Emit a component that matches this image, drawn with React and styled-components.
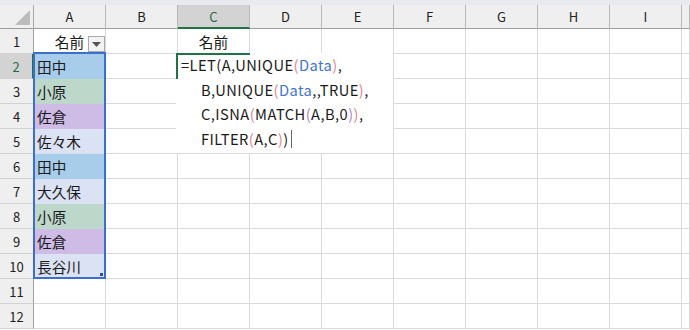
import React from 'react';
import styled, { createGlobalStyle } from 'styled-components';

const GlobalStyle = createGlobalStyle`
  body {
    margin: 0;
    background: #fff;
    font-family: "Noto Sans CJK JP", "Noto Sans", sans-serif;
    color: #111;
  }
`;

const COLUMNS = ['A', 'B', 'C', 'D', 'E', 'F', 'G', 'H', 'I', ''];
const FILLS = {
  blue: '#a8cdea',
  green: '#bdd8cb',
  lavender: '#cebbe6',
  pale: '#dae2f3',
};
const NAMES = [
  ['田中', 'blue'],
  ['小原', 'green'],
  ['佐倉', 'lavender'],
  ['佐々木', 'pale'],
  ['田中', 'blue'],
  ['大久保', 'pale'],
  ['小原', 'green'],
  ['佐倉', 'lavender'],
  ['長谷川', 'pale'],
];
const INK = { pink: '#e4848c', purple: '#b07fd3', blue: '#3f74cf' };

const App = () => {
  const rows = Array.from({ length: 12 }, (_, i) => i + 1);

  const renderCell = (row, col) => {
    if (row === 1 && col === 'A') {
      return (
        <Cell key={col} $center>
          名前
          <FilterButton>
            <svg width="9" height="5" viewBox="0 0 9 5">
              <path d="M0 0h9L4.5 5z" fill="#555" />
            </svg>
          </FilterButton>
        </Cell>
      );
    }
    if (row === 1 && col === 'C') {
      return <Cell key={col} $center>名前</Cell>;
    }
    if (col === 'A' && row >= 2 && row <= 10) {
      const [name, fill] = NAMES[row - 2];
      return (
        <Cell key={col} $fill={FILLS[fill]}>
          {name}
          {row === 2 && (
            <RangeOutline>
              <Handle />
            </RangeOutline>
          )}
        </Cell>
      );
    }
    if (row === 2 && col === 'C') {
      return (
        <Cell key={col}>
          <Editor>
            <Line>
              =LET(A,UNIQUE<Ink $c={INK.pink}>(</Ink><Ink $c={INK.blue}>Data</Ink>
              <Ink $c={INK.pink}>)</Ink>,
            </Line>
            <Line $indent>
              B,UNIQUE<Ink $c={INK.pink}>(</Ink><Ink $c={INK.blue}>Data</Ink>,,TRUE
              <Ink $c={INK.pink}>)</Ink>,
            </Line>
            <Line $indent>
              C,ISNA<Ink $c={INK.pink}>(</Ink>MATCH<Ink $c={INK.purple}>(</Ink>A,B,0
              <Ink $c={INK.purple}>)</Ink><Ink $c={INK.pink}>)</Ink>,
            </Line>
            <Line $indent>
              FILTER<Ink $c={INK.pink}>(</Ink>A,C<Ink $c={INK.pink}>)</Ink>)
              <Caret />
            </Line>
          </Editor>
        </Cell>
      );
    }
    return <Cell key={col} />;
  };

  return (
    <>
      <GlobalStyle />
      <Window>
        <TopStrip />
        <Sheet>
          <Corner>
            <CornerMark />
          </Corner>
          {COLUMNS.map((c, i) => (
            <ColHead key={i} $active={c === 'C'}>{c}</ColHead>
          ))}
          {rows.map((r) => (
            <React.Fragment key={r}>
              <RowHead $active={r === 2}>{r}</RowHead>
              {COLUMNS.map((c, i) => renderCell(r, c || 'J' + i))}
            </React.Fragment>
          ))}
        </Sheet>
      </Window>
    </>
  );
};

export default App;

const Window = styled.div`
  width: 690px;
  height: 330px;
  overflow: hidden;
  display: flex;
  flex-direction: column;
`;

const TopStrip = styled.div`
  height: 5px;
  background: #e7eaee;
  flex: none;
`;

const Sheet = styled.div`
  display: grid;
  grid-template-columns: 34px repeat(9, 72px) 1fr;
  grid-template-rows: 24px repeat(12, 25px);
`;

const Corner = styled.div`
  box-sizing: border-box;
  background: #efefef;
  border-right: 1px solid #a8a8a8;
  border-bottom: 1px solid #9e9e9e;
  display: flex;
  align-items: flex-end;
  justify-content: flex-end;
  padding: 0 3px 3px 0;
`;

const CornerMark = styled.div`
  width: 0;
  height: 0;
  border-left: 15px solid transparent;
  border-bottom: 15px solid #bcbcbc;
`;

const ColHead = styled.div`
  box-sizing: border-box;
  display: flex;
  align-items: center;
  justify-content: center;
  font-size: 13px;
  background: ${(p) => (p.$active ? '#d3d3d3' : '#efefef')};
  color: ${(p) => (p.$active ? '#1e6b40' : '#222')};
  border-right: 1px solid #b8b8b8;
  border-bottom: ${(p) => (p.$active ? '2px solid #217346' : '1px solid #9e9e9e')};
`;

const RowHead = styled.div`
  box-sizing: border-box;
  display: flex;
  align-items: center;
  justify-content: center;
  font-size: 13px;
  background: ${(p) => (p.$active ? '#d3d3d3' : '#efefef')};
  color: ${(p) => (p.$active ? '#1e6b40' : '#222')};
  border-bottom: 1px solid #d2d2d2;
  border-right: ${(p) => (p.$active ? '2px solid #217346' : '1px solid #9e9e9e')};
`;

const Cell = styled.div`
  box-sizing: border-box;
  position: relative;
  display: flex;
  align-items: center;
  justify-content: ${(p) => (p.$center ? 'center' : 'flex-start')};
  padding: 0 3px;
  font-size: 14.67px;
  white-space: nowrap;
  background: ${(p) => p.$fill || '#fff'};
  border-right: 1px solid #dadada;
  border-bottom: 1px solid ${(p) => (p.$fill ? 'transparent' : '#dadada')};
  color: #1a1a1a;
`;

const FilterButton = styled.div`
  position: absolute;
  right: 0;
  bottom: 1px;
  width: 17px;
  height: 16px;
  box-sizing: border-box;
  border: 1px solid #a9a9a9;
  background: #f3f3f3;
  display: flex;
  align-items: center;
  justify-content: center;
`;

const RangeOutline = styled.div`
  position: absolute;
  left: -1px;
  top: -2px;
  width: 73px;
  height: 227px;
  box-sizing: border-box;
  border: 2px solid #3b6fcb;
  pointer-events: none;
  z-index: 3;
`;

const Handle = styled.div`
  position: absolute;
  right: 1px;
  bottom: 1px;
  width: 3px;
  height: 3px;
  background: #24509e;
`;

const Editor = styled.div`
  position: absolute;
  left: -2px;
  top: -1px;
  width: 217px;
  height: 100px;
  box-sizing: border-box;
  background: #fff;
  padding: 0 0 0 5px;
  z-index: 2;

  &::before {
    content: '';
    position: absolute;
    left: 0;
    top: 0;
    width: 74px;
    height: 2px;
    background: #217346;
  }

  &::after {
    content: '';
    position: absolute;
    left: 0;
    top: 0;
    width: 2px;
    height: 26px;
    background: #217346;
  }
`;

const Line = styled.div`
  height: 24.67px;
  line-height: 24.67px;
  display: flex;
  align-items: center;
  padding-left: ${(p) => (p.$indent ? '20px' : '0')};
  font-size: 14.67px;
  letter-spacing: 0.45px;
  color: #1a1a1a;
  white-space: pre;
`;

const Ink = styled.span`
  color: ${(p) => p.$c};
`;

const Caret = styled.span`
  display: inline-block;
  width: 1px;
  height: 18px;
  margin-left: 2px;
  background: #666;
`;
